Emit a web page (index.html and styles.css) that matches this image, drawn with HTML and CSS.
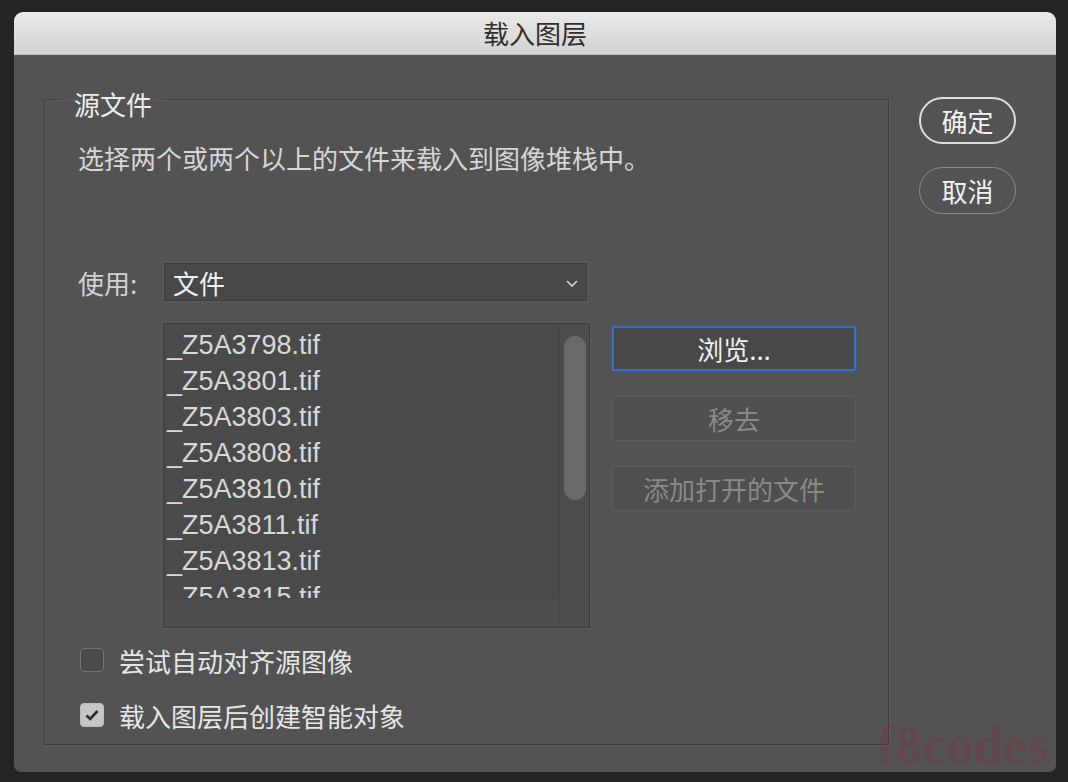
FILE: index.html
```html
<!DOCTYPE html>
<html lang="zh-CN">
<head>
  <meta charset="UTF-8" />
  <meta name="viewport" content="width=device-width, initial-scale=1.0" />
  <title>载入图层</title>
  <link rel="stylesheet" href="styles.css">
</head>
<body>

  <div class="dialog">
    <div class="titlebar">载入图层</div>

    <div class="content">
      <fieldset class="group">
        <legend>源文件</legend>
        <p class="desc">选择两个或两个以上的文件来载入到图像堆栈中。</p>

        <div class="use-row">
          <span class="label">使用:</span>
          <div class="select">
            <span>文件</span>
            <svg class="chevron" width="14" height="9" viewBox="0 0 14 9">
              <path d="M2 2 L7 7 L12 2" fill="none" stroke="#d0d0d0" stroke-width="1.7" />
            </svg>
          </div>
        </div>

        <div class="files-row">
          <div class="listbox">
            <ul class="files">
              <li>_Z5A3798.tif</li>
              <li>_Z5A3801.tif</li>
              <li>_Z5A3803.tif</li>
              <li>_Z5A3808.tif</li>
              <li>_Z5A3810.tif</li>
              <li>_Z5A3811.tif</li>
              <li>_Z5A3813.tif</li>
              <li>_Z5A3815.tif</li>
            </ul>
            <div class="vtrack"><div class="thumb"></div></div>
            <div class="htrack"></div>
            <div class="corner"></div>
          </div>

          <div class="file-buttons">
            <button class="btn focus">浏览...</button>
            <button class="btn" disabled>移去</button>
            <button class="btn" disabled>添加打开的文件</button>
          </div>
        </div>

        <div class="checks">
          <label class="check">
            <span class="box"></span>
            尝试自动对齐源图像
          </label>
          <label class="check">
            <span class="box checked">
              <svg width="16" height="14" viewBox="0 0 16 14">
                <path d="M2.5 7.5 L6.2 11 L13.5 3" fill="none" stroke="#2c2c2c" stroke-width="2.6" />
              </svg>
            </span>
            载入图层后创建智能对象
          </label>
        </div>
      </fieldset>

      <div class="actions">
        <button class="pill primary">确定</button>
        <button class="pill">取消</button>
      </div>
    </div>

    <div class="watermark">f8codes</div>
  </div>

</body>
</html>
```

FILE: styles.css
```css
body {
  margin: 0;
  background-color: #242424;
  font-family: "Noto Sans CJK SC", "Liberation Sans", sans-serif;
  font-size: 26px;
  color: #dcdcdc;
}
.dialog {
  position: relative;
  width: 1042px;
  height: 760px;
  margin: 12px 0 0 14px;
  background-color: #535353;
  border-radius: 9px 9px 7px 7px;
  overflow: hidden;
}
.titlebar {
  height: 42px;
  line-height: 42px;
  text-align: center;
  color: #2f2f2f;
  background: linear-gradient(#e9e9e9, #d3d3d3);
  border-bottom: 1px solid #bdbdbd;
}
.content {
  display: flex;
  gap: 30px;
  padding: 24px 0 0 30px;
}
.group {
  width: 845px;
  box-sizing: border-box;
  margin: 0;
  padding: 0 20px 11px 33px;
  border: 1px solid #3e3e3e;
  box-shadow: 1px 1px 0 #5c5c5c, inset 1px 1px 0 #5c5c5c;
}
.group legend {
  margin-left: -16px;
  padding: 10px 10px 0 12px;
  line-height: 30px;
  color: #ececec;
}
.desc {
  margin: 21px 0 0 0;
  line-height: 36px;
  color: #d6d6d6;
}
.use-row {
  display: flex;
  align-items: center;
  margin-top: 87px;
  height: 38px;
}
.label {
  width: 86px;
  color: #d2d2d2;
}
.select {
  display: flex;
  align-items: center;
  justify-content: space-between;
  width: 423px;
  height: 38px;
  box-sizing: border-box;
  padding: 0 7px 0 8px;
  background-color: #474747;
  border: 1px solid #3b3b3b;
  box-shadow: 0 0 0 1px #5b5b5b;
  color: #f0f0f0;
}
.chevron {
  margin-top: 2px;
}
.files-row {
  display: flex;
  gap: 22px;
  margin: 22px 0 0 85px;
}
.listbox {
  display: grid;
  grid-template-columns: 1fr 30px;
  grid-template-rows: 1fr 29px;
  width: 427px;
  height: 305px;
  box-sizing: border-box;
  border: 1px solid #3b3b3b;
  box-shadow: 0 0 0 1px #5a5a5a;
  background-color: #4a4a4a;
}
.files {
  margin: 0;
  padding: 3px 0 0 3px;
  list-style: none;
  overflow: hidden;
  font-family: "Liberation Sans", sans-serif;
  font-size: 27px;
  line-height: 36px;
  color: #d8d8d8;
}
.vtrack {
  background-color: #4c4c4c;
  border-left: 1px solid #444444;
  padding: 12px 3px 0 4px;
}
.thumb {
  height: 164px;
  border-radius: 11px;
  background-color: #696969;
}
.htrack {
  background-color: #4d4d4d;
  border-top: 1px solid #464646;
}
.corner {
  background-color: #4d4d4d;
  border-top: 1px solid #464646;
  border-left: 1px solid #464646;
}
.file-buttons {
  display: flex;
  flex-direction: column;
  gap: 25px;
  padding-top: 3px;
}
.btn {
  width: 244px;
  height: 45px;
  font-family: inherit;
  font-size: 26px;
  color: #f0f0f0;
  background-color: #484848;
  border: 1px solid #5f5f5f;
  border-radius: 2px;
  padding: 0;
}
.btn.focus {
  border: 2px solid #2f6fd2;
  box-shadow: 0 0 2px #2f6fd2;
}
.btn:disabled {
  color: #8a8a8a;
  background-color: #4f4f4f;
  border-color: #5c5c5c;
}
.checks {
  display: flex;
  flex-direction: column;
  gap: 19px;
  margin-top: 14px;
}
.check {
  display: flex;
  align-items: center;
  gap: 15px;
  height: 36px;
  margin-left: 2px;
  color: #e6e6e6;
}
.box {
  display: flex;
  align-items: center;
  justify-content: center;
  width: 24px;
  height: 24px;
  box-sizing: border-box;
  border: 1.5px solid #737373;
  border-radius: 4px;
  background-color: #4a4a4a;
}
.box.checked {
  border-color: #bdbdbd;
  background-color: #c6c6c6;
}
.actions {
  display: flex;
  flex-direction: column;
  gap: 23px;
  margin-top: 18px;
}
.pill {
  width: 97px;
  height: 47px;
  font-family: inherit;
  font-size: 26px;
  color: #f2f2f2;
  background: transparent;
  border: 1.5px solid #8a8a8a;
  border-radius: 24px;
  padding: 0;
}
.pill.primary {
  border: 2px solid #dedede;
}
.watermark {
  position: absolute;
  right: 8px;
  bottom: -4px;
  font-family: "Liberation Serif", serif;
  font-size: 54px;
  font-weight: bold;
  color: rgba(150, 30, 55, 0.22);
}
```
